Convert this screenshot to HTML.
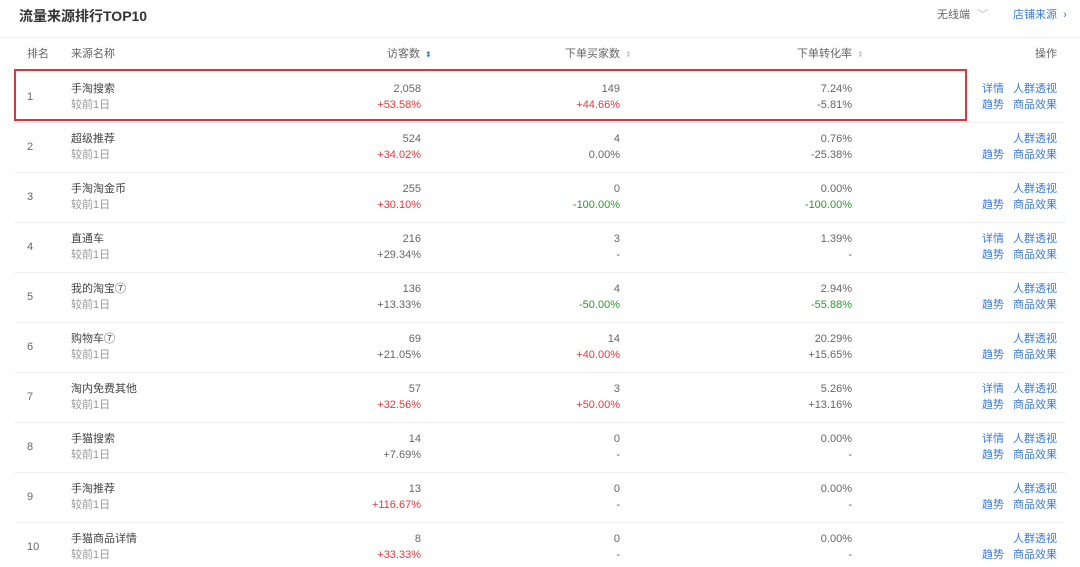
<!DOCTYPE html>
<html><head><meta charset="utf-8"><style>
*{margin:0;padding:0;box-sizing:border-box}
body{width:1080px;height:567px;background:#fff;font-family:"Liberation Sans","Noto Sans CJK SC",sans-serif;color:#333;position:relative;overflow:hidden;font-size:11px}
.a{position:absolute;white-space:nowrap;line-height:16px}
.r{text-align:right}
.g{color:#999}.red{color:#e4393c}.grn{color:#2a9a2a}.gy{color:#666}
.nm{color:#444}
.b{color:#3b7cd6}
.line{position:absolute;left:14px;right:14px;height:1px;background:#f0f0f0}
.arr{font-size:8px;color:#ccc;margin-left:5px}
</style></head><body>
<div class="a" style="left:19px;top:6px;font-size:14px;font-weight:bold;line-height:20px;color:#333">流量来源排行TOP10</div>
<div class="a gy" style="left:937px;top:7px">无线端 <span style="color:#bbb;margin-left:4px">﹀</span></div>
<div class="a b" style="left:1013px;top:7px">店铺来源 <span style="margin-left:3px">›</span></div>
<div style="position:absolute;left:0;right:0;top:37px;height:1px;background:#eee"></div>
<div class="a gy" style="left:27px;top:46px">排名</div>
<div class="a gy" style="left:71px;top:46px">来源名称</div>
<div class="a gy" style="left:387px;top:46px">访客数<span class="arr" style="color:#3b7cd6">⬍</span></div>
<div class="a gy" style="left:565px;top:46px">下单买家数<span class="arr">⬍</span></div>
<div class="a gy" style="left:797px;top:46px">下单转化率<span class="arr">⬍</span></div>
<div class="a gy" style="left:1035px;top:46px">操作</div>
<div id="rows"></div>
<div style="position:absolute;left:14px;top:69px;width:953px;height:52px;border:2px solid #d9363e"></div>
<script>
var d=[
["1","手淘搜索","2,058","+53.58%","red","149","+44.66%","red","7.24%","-5.81%","gy",1],
["2","超级推荐","524","+34.02%","red","4","0.00%","gy","0.76%","-25.38%","gy",0],
["3","手淘淘金币","255","+30.10%","red","0","-100.00%","grn","0.00%","-100.00%","grn",0],
["4","直通车","216","+29.34%","gy","3","-","gy","1.39%","-","gy",1],
["5","我的淘宝⑦","136","+13.33%","gy","4","-50.00%","grn","2.94%","-55.88%","grn",0],
["6","购物车⑦","69","+21.05%","gy","14","+40.00%","red","20.29%","+15.65%","gy",0],
["7","淘内免费其他","57","+32.56%","red","3","+50.00%","red","5.26%","+13.16%","gy",1],
["8","手猫搜索","14","+7.69%","gy","0","-","gy","0.00%","-","gy",1],
["9","手淘推荐","13","+116.67%","red","0","-","gy","0.00%","-","gy",0],
["10","手猫商品详情","8","+33.33%","red","0","-","gy","0.00%","-","gy",0]];
var h="";
d.forEach(function(r,i){var t=81+50*i;
if(i>0)h+='<div class="line" style="top:'+(72+50*i)+'px"></div>';
h+='<div class="a gy" style="left:27px;top:'+(t+8)+'px">'+r[0]+'</div>';
h+='<div class="a nm" style="left:71px;top:'+t+'px">'+r[1]+'</div><div class="a g" style="left:71px;top:'+(t+16)+'px">较前1日</div>';
function c(x,v,s,cl){h+='<div class="a r gy" style="right:'+(1080-x)+'px;top:'+t+'px">'+v+'</div><div class="a r '+cl+'" style="right:'+(1080-x)+'px;top:'+(t+16)+'px">'+s+'</div>';}
c(421,r[2],r[3],r[4]);c(620,r[5],r[6],r[7]);c(852,r[8],r[9],r[10]);
if(r[11])h+='<div class="a b" style="left:982px;top:'+t+'px">详情</div>';
h+='<div class="a b" style="left:1013px;top:'+t+'px">人群透视</div><div class="a b" style="left:982px;top:'+(t+16)+'px">趋势</div><div class="a b" style="left:1013px;top:'+(t+16)+'px">商品效果</div>';
});
document.getElementById("rows").innerHTML=h;
</script>
</body></html>
